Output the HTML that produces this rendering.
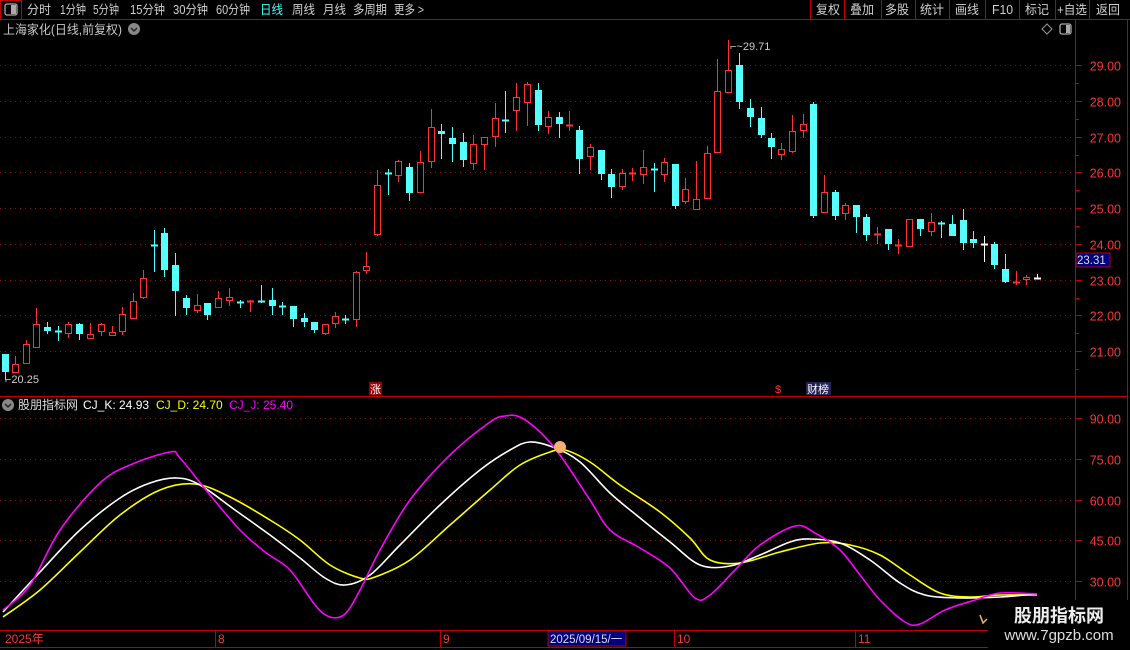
<!DOCTYPE html>
<html><head><meta charset="utf-8">
<style>
html,body{margin:0;padding:0;background:#000;width:1130px;height:650px;overflow:hidden;font-family:"Liberation Sans","Noto Sans CJK SC",sans-serif;}
svg{position:absolute;left:0;top:0}
</style></head>
<body>
<svg id="s" width="1130" height="650" xmlns="http://www.w3.org/2000/svg" font-family="Liberation Sans, Noto Sans CJK SC, sans-serif">
<rect width="1130" height="650" fill="#000"/>
<line x1="0" y1="19.5" x2="1130" y2="19.5" stroke="#c00000"/>
<rect x="0.5" y="0.5" width="21" height="19" fill="none" stroke="#c00000"/>
<rect x="5" y="4" width="12" height="11" rx="2" fill="none" stroke="#aaa" stroke-width="1.3"/>
<rect x="11" y="5" width="5" height="9" fill="#aaa"/>
<g font-size="12.5" fill="#d0d0d0" lengthAdjust="spacingAndGlyphs">
<text x="27" y="14" textLength="24" lengthAdjust="spacingAndGlyphs">分时</text>
<text x="60" y="14" textLength="26" lengthAdjust="spacingAndGlyphs">1分钟</text>
<text x="93" y="14" textLength="26" lengthAdjust="spacingAndGlyphs">5分钟</text>
<text x="130" y="14" textLength="35" lengthAdjust="spacingAndGlyphs">15分钟</text>
<text x="173" y="14" textLength="35" lengthAdjust="spacingAndGlyphs">30分钟</text>
<text x="216" y="14" textLength="34" lengthAdjust="spacingAndGlyphs">60分钟</text>
<text x="260" y="14" fill="#4ff" textLength="23" lengthAdjust="spacingAndGlyphs">日线</text>
<text x="292" y="14" textLength="23" lengthAdjust="spacingAndGlyphs">周线</text>
<text x="323" y="14" textLength="23" lengthAdjust="spacingAndGlyphs">月线</text>
<text x="353" y="14" textLength="34" lengthAdjust="spacingAndGlyphs">多周期</text>
<text x="394" y="14" textLength="30" lengthAdjust="spacingAndGlyphs">更多 &gt;</text>
<text x="816" y="14" textLength="24" lengthAdjust="spacingAndGlyphs">复权</text>
<text x="850" y="14" textLength="24" lengthAdjust="spacingAndGlyphs">叠加</text>
<text x="885" y="14" textLength="24" lengthAdjust="spacingAndGlyphs">多股</text>
<text x="920" y="14" textLength="24" lengthAdjust="spacingAndGlyphs">统计</text>
<text x="955" y="14" textLength="24" lengthAdjust="spacingAndGlyphs">画线</text>
<text x="992" y="14" textLength="21" lengthAdjust="spacingAndGlyphs">F10</text>
<text x="1025" y="14" textLength="24" lengthAdjust="spacingAndGlyphs">标记</text>
<text x="1057" y="14" textLength="30" lengthAdjust="spacingAndGlyphs">+自选</text>
<text x="1096" y="14" textLength="24" lengthAdjust="spacingAndGlyphs">返回</text>
</g>
<g stroke="#c00000"><line x1="810.5" y1="0" x2="810.5" y2="19"/><line x1="844.5" y1="0" x2="844.5" y2="19"/><line x1="881.5" y1="0" x2="881.5" y2="19"/><line x1="915.5" y1="0" x2="915.5" y2="19"/><line x1="949.5" y1="0" x2="949.5" y2="19"/><line x1="985.5" y1="0" x2="985.5" y2="19"/><line x1="1019.5" y1="0" x2="1019.5" y2="19"/><line x1="1055.5" y1="0" x2="1055.5" y2="19"/><line x1="1089.5" y1="0" x2="1089.5" y2="19"/></g>
<text x="3" y="34" font-size="12.5" fill="#c8c8c8" textLength="119" lengthAdjust="spacingAndGlyphs">上海家化(日线,前复权)</text>
<circle cx="134" cy="29" r="6" fill="#888"/><path d="M131 28l3 3 3-3" stroke="#222" stroke-width="1.5" fill="none"/>
<path d="M1047 24l5 5-5 5-5-5z" fill="none" stroke="#999"/>
<rect x="1060" y="24" width="11" height="10" rx="2" fill="none" stroke="#aaa" stroke-width="1.3"/><rect x="1066" y="25" width="4" height="8" fill="#aaa"/>
<line x1="1075.5" y1="20" x2="1075.5" y2="631" stroke="#c00000"/>
<line x1="1127.5" y1="20" x2="1127.5" y2="650" stroke="#c00000"/>
<line x1="0" y1="396.5" x2="1127" y2="396.5" stroke="#c00000"/>
<line x1="0" y1="630.5" x2="1127" y2="630.5" stroke="#c00000"/>
<line x1="0" y1="647.5" x2="1127" y2="647.5" stroke="#c00000"/>
<g id="grid"></g>
<g id="cnd"></g>
<g id="ind"></g>
<text x="5" y="383" font-size="11" fill="#ccc">⌐20.25</text>
<text x="730" y="50" font-size="11" fill="#ccc">⌐~29.71</text>
<rect x="369" y="382" width="13" height="13" fill="#900"/><text x="370" y="393" font-size="11" fill="#fff">涨</text>
<text x="775" y="393" font-size="11" fill="#f33">$</text>
<rect x="806" y="382" width="25" height="13" fill="#225"/><text x="807" y="393" font-size="11" fill="#fff">财榜</text>
<rect x="1076" y="253" width="34" height="14" fill="#000080" stroke="#c00000"/><text x="1077" y="264" font-size="11.5" fill="#ddd">23.31</text>
<circle cx="8" cy="405" r="6" fill="#888"/><path d="M5 404l3 3 3-3" stroke="#222" stroke-width="1.5" fill="none"/>
<text x="18" y="409" font-size="12" fill="#ddd">股朋指标网</text>
<text x="83" y="409" font-size="12" fill="#fff">CJ_K: 24.93</text>
<text x="156" y="409" font-size="12" fill="#ff0">CJ_D: 24.70</text>
<text x="229" y="409" font-size="12" fill="#f0f">CJ_J: 25.40</text>
<g font-size="12" fill="#f33">
<text x="5" y="643">2025年</text><text x="218" y="643">8</text><text x="443" y="643">9</text><text x="677" y="643">10</text><text x="858" y="643">11</text>
</g>
<g stroke="#c00000"><line x1="215.5" y1="631" x2="215.5" y2="647"/><line x1="440.5" y1="631" x2="440.5" y2="647"/><line x1="674.5" y1="631" x2="674.5" y2="647"/><line x1="855.5" y1="631" x2="855.5" y2="647"/></g>
<rect x="548" y="631" width="78" height="15" fill="#000080" stroke="#c00000"/><text x="550" y="643" font-size="11.5" fill="#ddd">2025/09/15/一</text>
<rect x="988" y="600" width="142" height="50" fill="#000"/>
<text x="1059" y="622" font-size="18" font-weight="bold" fill="#eee" text-anchor="middle">股朋指标网</text>
<text x="1059" y="640" font-size="15" fill="#ddd" text-anchor="middle">www.7gpzb.com</text>
<circle cx="560" cy="447" r="6" fill="#f4b070"/>
<path d="M980 615l3 8 4-4" stroke="#f4b070" stroke-width="1.5" fill="none"/>
</svg>
<script>
var NS="http://www.w3.org/2000/svg";
function el(p,t,a){var e=document.createElementNS(NS,t);for(var k in a)e.setAttribute(k,a[k]);p.appendChild(e);return e;}
var g=document.getElementById('grid');
for(var p=29;p>=21;p--){var y=Math.round(65+(29-p)*35.75)+0.5;
el(g,'line',{x1:0,y1:y,x2:1075,y2:y,stroke:'#8a1010','stroke-dasharray':'1 4'});
el(g,'line',{x1:1075,y1:y,x2:1082,y2:y,stroke:'#c00000'});
var t=el(g,'text',{x:1121,y:y+5,'font-size':12.5,fill:'#f33','text-anchor':'end'});t.textContent=p.toFixed(2);
el(g,'line',{x1:1075,y1:y+18,x2:1079,y2:y+18,stroke:'#c00000'});}
[90,75,60,45,30].forEach(function(v){var y=Math.round(418+(90-v)*2.717)+0.5;
el(g,'line',{x1:0,y1:y,x2:1075,y2:y,stroke:'#8a1010','stroke-dasharray':'1 4'});
el(g,'line',{x1:1075,y1:y,x2:1082,y2:y,stroke:'#c00000'});
var t=el(g,'text',{x:1121,y:y+5,'font-size':12.5,fill:'#f33','text-anchor':'end'});t.textContent=v.toFixed(2);});
var C=[[4.5,354,372,354,380,'c'],[15,364,373,356,373,'r'],[26,344,364,340,364,'r'],[36,324,348,308,348,'r'],[47,327,331,322,334,'c'],[58,331,332,326,341,'c'],[68,324,334,322,338,'r'],[79,324,334,323,340,'c'],[90,334,339,323,339,'r'],[101,324,332,323,336,'r'],[112,332,336,326,336,'r'],[122,314,332,307,335,'r'],[133,301,319,293,319,'r'],[143,278,298,270,299,'r'],[154,245,246,230,272,'c'],[164,233,270,228,277,'c'],[175,265,291,253,316,'c'],[186,298,308,295,315,'c'],[197,305,311,294,313,'r'],[207,303,315,303,320,'c'],[218,298,308,291,308,'r'],[229,297,301,288,306,'r'],[240,302,303,300,308,'c'],[250,301,302,300,312,'r'],[261,301,302,285,303,'c'],[272,300,306,288,315,'c'],[282,306,307,302,315,'c'],[293,306,319,306,327,'c'],[304,318,322,313,327,'c'],[314,322,330,322,333,'c'],[325,324,334,324,335,'r'],[335,316,324,312,328,'r'],[345,319,320,315,324,'c'],[356,272,320,271,327,'r'],[366,266,271,252,274,'r'],
[377,185,235,170,236,'r'],[388,173,174,169,195,'c'],[398,161,176,160,182,'r'],[409,167,193,163,201,'c'],[420,162,193,151,193,'r'],[431,127,162,109,168,'r'],[441,131,134,124,159,'c'],[452,138,144,127,162,'c'],[463,142,160,133,167,'c'],[473,144,164,135,170,'r'],[484,137,145,137,170,'r'],[495,118,137,103,147,'r'],[505,120,121,91,133,'c'],[516,97,111,83,131,'r'],[527,84,103,82,126,'r'],[538,90,125,83,131,'c'],[548,117,127,111,134,'r'],[559,117,124,112,138,'c'],[569,125,127,111,131,'r'],[579,130,159,126,174,'c'],[590,147,157,144,170,'r'],[601,150,174,150,180,'c'],[611,174,187,169,198,'c'],[622,173,187,169,190,'r'],[632,173,175,168,181,'r'],[643,167,175,150,184,'r'],[654,169,170,163,192,'c'],[664,162,175,158,182,'r'],[675,164,206,164,209,'c'],[685,189,202,178,204,'r'],[696,199,210,161,210,'r'],[707,153,199,146,199,'r'],
[717,91,153,59,153,'r'],[728,70,93,40,93,'r'],[739,65,102,53,109,'c'],[750,108,117,99,127,'c'],[761,118,135,107,138,'c'],[771,138,147,133,159,'c'],[781,149,155,143,160,'r'],[792,131,152,115,153,'r'],[803,124,131,114,138,'r'],[813,104,216,102,218,'c'],[824,192,213,175,213,'r'],[835,192,216,190,220,'c'],[845,205,214,203,220,'r'],[856,205,217,205,233,'c'],[866,217,235,214,241,'c'],[877,234,235,227,244,'r'],[888,229,244,229,250,'c'],[898,245,246,239,254,'r'],[909,219,247,219,247,'r'],[920,219,229,219,236,'c'],[931,222,232,213,236,'r'],[941,223,224,221,238,'c'],[952,224,236,215,236,'c'],[963,220,243,209,250,'c'],[973,239,243,231,248,'c'],[984,244,245,236,262,'w'],[994,244,265,242,269,'c'],[1005,269,282,254,283,'c'],[1016,282,283,271,285,'r'],[1026,277,280,275,285,'r'],[1037,278,279,274,279,'w']];
var cg=document.getElementById('cnd');
C.forEach(function(c){var x=Math.round(c[0])+0.5,col=c[5]=='r'?'#ff3232':(c[5]=='c'?'#54ffff':'#fff');
el(cg,'line',{x1:x,y1:c[3],x2:x,y2:c[4],stroke:col});
var h=c[2]-c[1];
if(h<=2){el(cg,'line',{x1:x-3.5,y1:c[1]+0.5,x2:x+3.5,y2:c[1]+0.5,stroke:col,'stroke-width':h<1?1:2});}
else if(c[5]=='r'){el(cg,'rect',{x:x-3,y:c[1]+0.5,width:6,height:h-1,fill:'#000',stroke:col});}
else el(cg,'rect',{x:x-3.5,y:c[1],width:7,height:h,fill:col});});
function pl(pts,col){
var s='M'+pts[0][0]+','+pts[0][1];
for(var i=0;i<pts.length-1;i++){var p0=pts[i-1]||pts[i],p1=pts[i],p2=pts[i+1],p3=pts[i+2]||p2;
s+='C'+(p1[0]+(p2[0]-p0[0])/6)+','+(p1[1]+(p2[1]-p0[1])/6)+' '+(p2[0]-(p3[0]-p1[0])/6)+','+(p2[1]-(p3[1]-p1[1])/6)+' '+p2[0]+','+p2[1];}
el(document.getElementById('ind'),'path',{d:s,fill:'none',stroke:col,'stroke-width':1.6});}
pl([[3,617],[40,590],[80,552],[120,515],[160,490],[195,484],[230,497],[270,520],[300,540],[330,565],[360,578],[375,577],[410,560],[450,525],[490,490],[520,465],[550,452],[565,450],[590,462],[620,485],[660,512],[690,538],[710,560],[740,563],[780,552],[820,543],[850,545],[880,555],[910,575],[940,593],[970,597],[1000,595],[1037,595]],'#ffff00');
pl([[3,612],[40,572],[80,530],[120,498],[150,483],[177,478],[200,485],[235,510],[270,535],[300,558],[325,578],[345,585],[370,575],[400,545],[440,505],[480,470],[510,450],[530,442],[555,448],[580,462],[610,493],[640,518],[670,542],[700,565],[730,566],[760,555],[790,542],[810,539],[840,543],[870,560],[900,583],[925,595],[960,598],[1000,597],[1037,594]],'#ffffff');
pl([[3,610],[30,585],[60,530],[100,483],[130,465],[170,452],[180,458],[210,495],[240,530],[265,552],[290,570],[315,605],[330,617],[345,614],[360,590],[380,550],[410,500],[450,455],[490,422],[505,416],[520,417],[540,432],[560,455],[590,500],[610,530],[640,548],[670,568],[695,598],[710,595],[735,570],[760,545],[795,526],[815,533],[840,550],[860,575],[880,600],[905,622],[920,624],[945,610],[975,600],[1000,593],[1037,594]],'#ff00ff');
var s=document.getElementById('s');var ch=[].slice.call(s.children);ch.slice(-6).forEach(function(e){s.appendChild(e)});
</script>
</body></html>
